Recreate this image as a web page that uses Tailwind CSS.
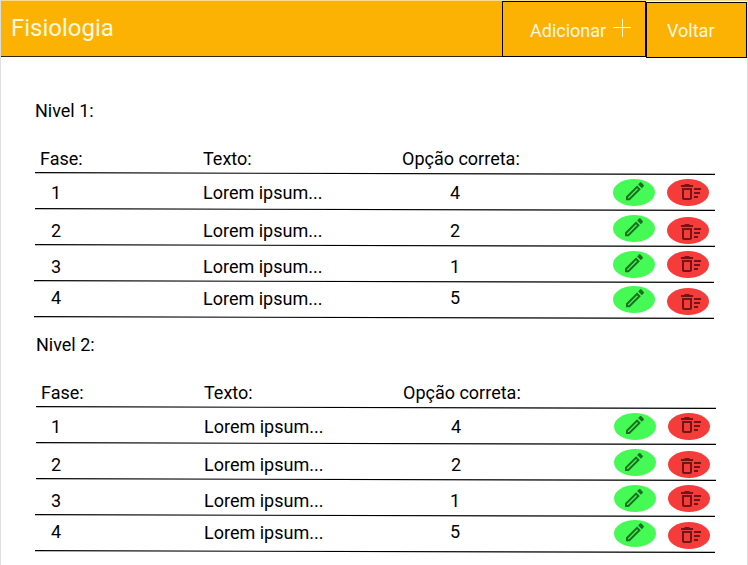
<!DOCTYPE html>
<html lang="pt">
<head>
<meta charset="utf-8">
<title>Fisiologia</title>
<script src="https://cdn.jsdelivr.net/npm/@tailwindcss/browser@4"></script>
</head>
<body class="w-[748px] h-[565px] overflow-hidden bg-white font-['Roboto',sans-serif] text-[18px] leading-5 text-black">
<svg class="hidden">
  <symbol id="pencil" viewBox="0 0 24 24"><path d="M14.06 9.02l.92.92L5.92 19H5v-.92l9.06-9.06M17.66 3c-.25 0-.51.1-.7.29l-1.83 1.83 3.75 3.75 1.83-1.83c.39-.39.39-1.02 0-1.41l-2.34-2.34c-.2-.2-.45-.29-.71-.29zm-3.6 3.19L3 17.25V21h3.75L17.81 9.94l-3.75-3.75z"/></symbol>
  <symbol id="sweep" viewBox="0 0 24 24"><path d="M15 16h4v2h-4zm0-8h7v2h-7zm0 4h6v2h-6zM3 18c0 1.1.9 2 2 2h6c1.1 0 2-.9 2-2V8H3v10zm2-8h6v8H5v-8zm5-6H6L5 5H2v2h12V5h-3l-1-1z"/></symbol>
</svg>
<div class="h-full border-x border-[#dedede]">
  <header class="flex h-[58px] border-t border-[#f6dc8d] text-[#fff8e0]">
    <h1 class="h-[56px] w-[501px] border-b border-[#3b2200] bg-[#fbb203] pl-[10px] pt-[12px] text-[24px] leading-[30px]">Fisiologia</h1>
    <button class="flex h-[56px] w-[144px] items-center border border-black bg-[#fbb203] pl-[27px] pt-[3px]">Adicionar
      <svg class="ml-[6px] mb-[6px] h-[20px] w-[20px]" viewBox="0 0 20 20" fill="none" stroke="#fff8e0"><path d="M1 9.5h18M10.5 1v18"/></svg>
    </button>
    <button class="mt-px h-[56px] flex-1 border border-black bg-[#fbb203] pl-[20px] pt-[1px] text-left">Voltar</button>
  </header>
  <main id="levels"></main>
</div>
<script>
const rule = (x1, x2) => `<svg class="absolute inset-x-0 top-0 h-[4px] w-full" viewBox="0 0 746 4"><path d="M${x1 - 1} .6L${x2 - 1} 2.4" stroke="#000" stroke-width="1.1"/></svg>`;
// Per row: phase, answer, text top, digit top, green y, red y, pencil x/y, bin y
const levels = [
  { name: 'Nivel 1:', dx: 0, rows: [
    ['1','4',11,11,20.5,20.5,623,7.3,8],
    ['2','2',13,13,20.5,22.5,622,7.3,12],
    ['3','1',13,13,20.5,20.5,622,7.3,8],
    ['4','5',9,8,19.5,21.5,623,6.3,10]] },
  { name: 'Nivel 2:', dx: 1, rows: [
    ['1','4',11,11,20.5,20.5,623,7,7],
    ['2','2',13,13,20.5,22.5,622,8,12],
    ['3','1',13,13,20.5,20.5,622,8,9],
    ['4','5',9,8,19.5,21.5,623,6.3,9]] }
];
document.getElementById('levels').innerHTML = levels.map(l => `
<section class="h-[234px] pt-[43px]">
  <h2 class="h-[48px]" style="padding-left:${34 + l.dx}px">${l.name}</h2>
  <div class="grid h-[23px] grid-cols-[163px_199px_1fr]" style="padding-left:${39 + l.dx}px"><span>Fase:</span><span>Texto:</span><span>Opção correta:</span></div>
  ${l.rows.map((r, i) => `
  <div class="relative grid h-[36px] grid-cols-[152px_247px_1fr] pl-[50px]">
    ${rule((i < 3 ? 35 : 34) + l.dx, (i < 3 ? 715 : 714) + l.dx)}
    <span style="padding-top:${r[3]}px">${r[0]}</span>
    <span style="padding-top:${r[2]}px;padding-left:${l.dx}px">Lorem ipsum...</span>
    <span style="padding-top:${r[3]}px;padding-left:${i < 2 ? l.dx : 0}px">${r[1]}</span>
    <svg class="absolute right-[35px] top-0 h-[38px] w-[102px]" viewBox="610 0 102 38">
      <ellipse cx="${634 + l.dx}" cy="${r[4]}" rx="21" ry="13.5" fill="#46fa55"/>
      <ellipse cx="${688 + l.dx}" cy="${r[5]}" rx="21" ry="13.5" fill="#f63b3b"/>
      <use href="#pencil" x="${r[6]}" y="${r[7]}" width="24" height="24" fill="#176f20"/>
      <use href="#sweep" x="679" y="${r[8]}" width="24" height="24" fill="#701616"/>
    </svg>
  </div>`).join('')}
  <div class="relative h-[4px]">${rule(34 + l.dx, 714 + l.dx)}</div>
</section>`).join('');
</script>
</body>
</html>
